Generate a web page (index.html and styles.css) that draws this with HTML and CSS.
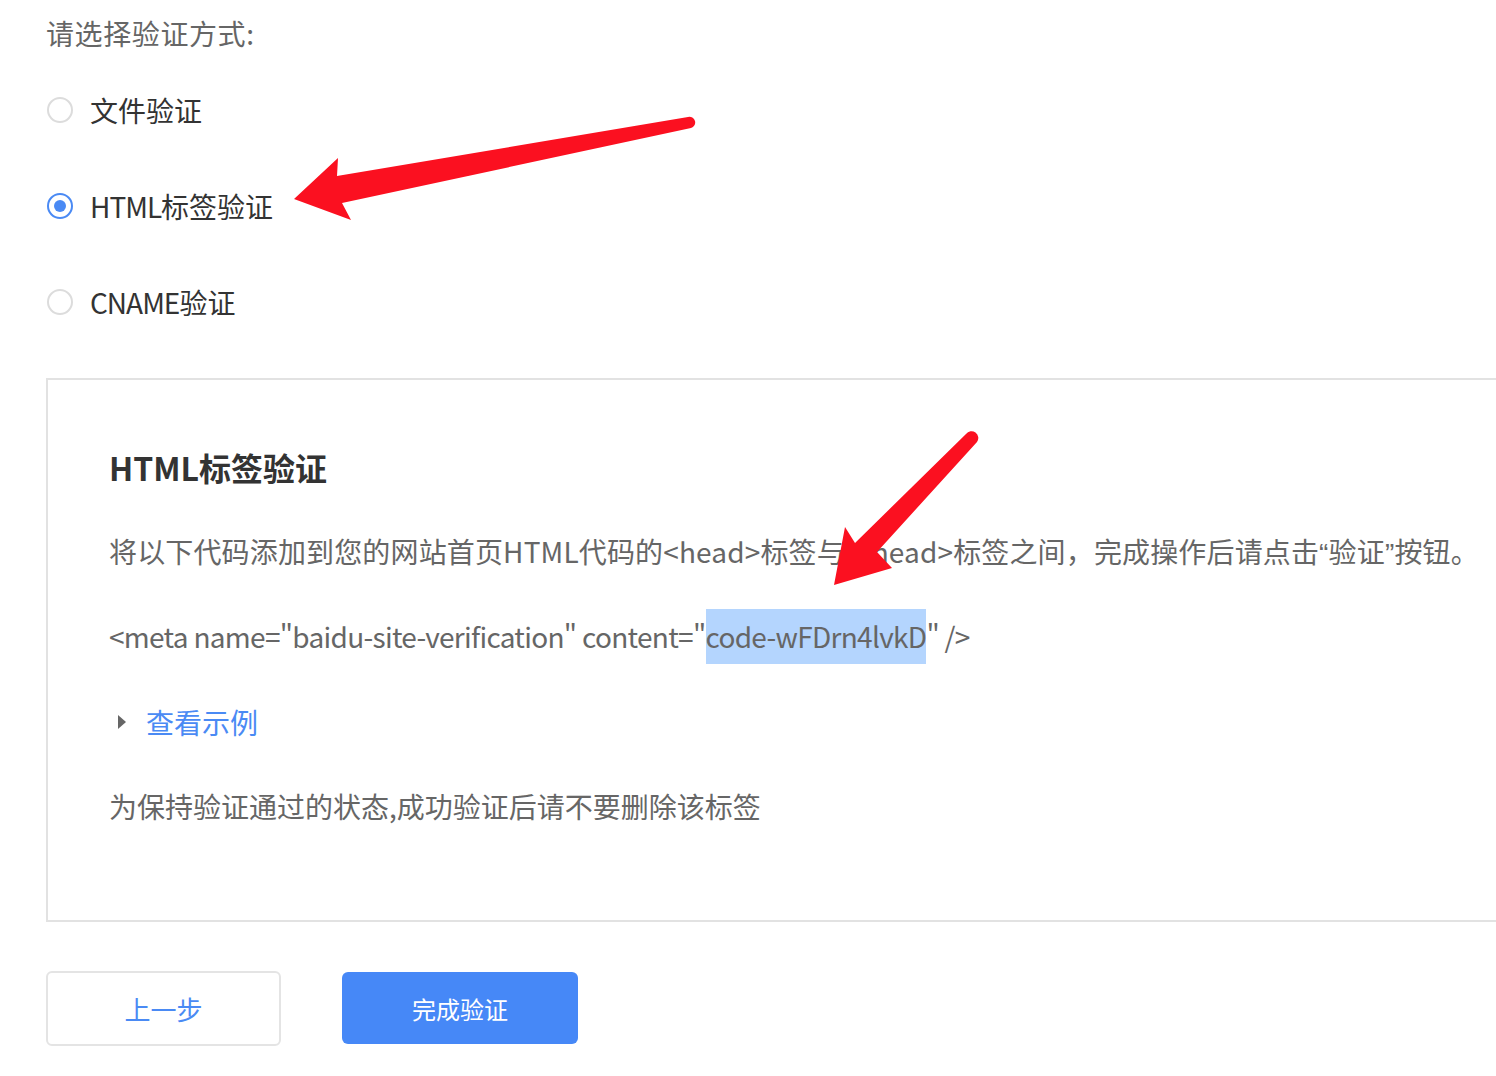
FILE: index.html
```html
<!DOCTYPE html>
<html lang="zh-CN">
<head>
<meta charset="utf-8">
<title>验证方式</title>
<link rel="stylesheet" href="styles.css">
</head>
<body>
<div class="page">
  <div class="prompt">请选择验证方式:</div>
  <div class="options">
    <label class="option"><span class="radio"></span><span class="option-text">文件验证</span></label>
    <label class="option"><span class="radio checked"></span><span class="option-text"><span class="latin">HTML</span>标签验证</span></label>
    <label class="option"><span class="radio"></span><span class="option-text"><span class="latin">CNAME</span>验证</span></label>
  </div>
  <div class="panel">
    <div class="panel-title">HTML标签验证</div>
    <div class="panel-line intro">将以下代码添加到您的网站首页HTML代码的&lt;head&gt;标签与&lt;/head&gt;标签之间，完成操作后请点击<span class="q">“</span>验证<span class="q">”</span>按钮。</div>
    <div class="panel-line code">&lt;meta name="baidu-site-verification" content="<span class="hl">code-wFDrn4lvkD</span>" /&gt;</div>
    <div class="panel-line example"><span class="caret"></span><span class="link">查看示例</span></div>
    <div class="panel-line">为保持验证通过的状态,成功验证后请不要删除该标签</div>
  </div>
  <div class="actions">
    <button class="btn btn-ghost">上一步</button>
    <button class="btn btn-primary">完成验证</button>
  </div>
</div>
<svg class="arrows" width="1496" height="1076" viewBox="0 0 1496 1076">
  <path d="M688 117 L337 176 L338 158 L294 199 L351 220 L342 203 L691 128 A5.7 5.7 0 0 0 688 117 Z" fill="#fb1020"/>
  <path d="M966 434 L855 543 L845 527 L834 585 L892 568 L877 552 L977 442 A6.8 6.8 0 0 0 966 434 Z" fill="#fb1020"/>
</svg>
</body>
</html>
```

FILE: styles.css
```css
html, body {
  margin: 0;
  padding: 0;
  background: #fff;
}
body {
  width: 1496px;
  height: 1076px;
  overflow: hidden;
  position: relative;
  font-family: "Noto Sans CJK SC", "Noto Sans", sans-serif;
}
.page {
  padding-left: 46px;
}
.prompt {
  margin-top: 13px;
  font-size: 28px;
  line-height: 40px;
  color: #666;
  letter-spacing: 0.6px;
}
.options {
  margin-top: 9px;
  display: flex;
  flex-direction: column;
}
.option {
  height: 96px;
  display: flex;
  align-items: center;
  font-size: 28px;
  color: #333;
}
.latin {
  letter-spacing: -1px;
}
.radio {
  width: 26px;
  height: 26px;
  box-sizing: border-box;
  border: 2px solid #dcdcdc;
  border-radius: 50%;
  margin-left: 1px;
  margin-right: 17px;
  display: flex;
  align-items: center;
  justify-content: center;
  flex: none;
}
.radio.checked {
  border-color: #4a8af4;
}
.radio.checked::after {
  content: "";
  width: 12px;
  height: 12px;
  border-radius: 50%;
  background: #4a8af4;
}
.panel {
  margin-top: 28px;
  margin-right: -200px;
  border: 2px solid #e2e2e2;
  padding: 45px 0 72px 61px;
  white-space: nowrap;
}
.panel-title {
  font-size: 32px;
  font-weight: 700;
  line-height: 84px;
  color: #333;
}
.panel-line {
  font-size: 28px;
  line-height: 84px;
  color: #666;
}
.intro {
  letter-spacing: 0.15px;
}
.q {
  font-family: "Liberation Sans", sans-serif;
}
.code {
  letter-spacing: -0.7px;
  line-height: 80px;
  padding-bottom: 4px;
}
.hl {
  display: inline-block;
  line-height: 55px;
  background: #b4d5fe;
}
.example {
  display: flex;
  align-items: center;
}
.caret {
  width: 0;
  height: 0;
  border-top: 7px solid transparent;
  border-bottom: 7px solid transparent;
  border-left: 8px solid #666;
  margin-left: 9px;
  margin-right: 20px;
}
.link {
  color: #4a8af4;
}
.actions {
  margin-top: 49px;
  display: flex;
  align-items: flex-start;
  gap: 61px;
}
.btn {
  font-family: "Noto Sans CJK SC", sans-serif;
  font-size: 24px;
  border-radius: 6px;
  cursor: pointer;
  padding: 0;
}
.btn-ghost {
  width: 235px;
  height: 75px;
  background: #fff;
  border: 2px solid #e4e4e4;
  color: #4a8af4;
  font-size: 26px;
}
.btn-primary {
  margin-top: 1px;
  width: 236px;
  height: 72px;
  background: #4688f7;
  border: none;
  color: #fff;
}
.arrows {
  position: absolute;
  left: 0;
  top: 0;
  pointer-events: none;
}
```
